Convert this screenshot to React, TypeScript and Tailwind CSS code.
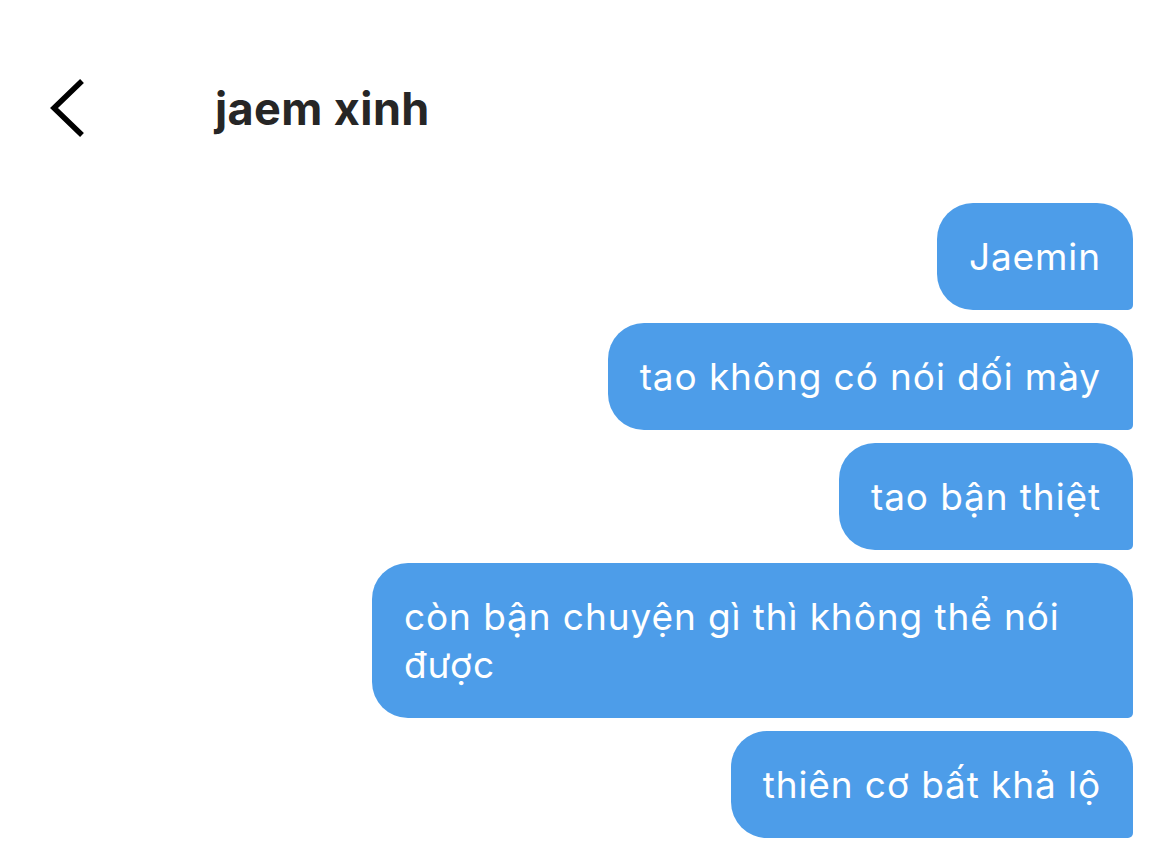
import React from 'react';

const messages = [
  'Jaemin',
  'tao không có nói dối mày',
  'tao bận thiệt',
  'còn bận chuyện gì thì không thể nói được',
  'thiên cơ bất khả lộ',
];

export default function App() {
  return (
    <div className="w-[1169px] h-[846px] overflow-hidden bg-white" style={{ fontFamily: 'Inter, "Noto Sans", sans-serif' }}>
      {/* Header */}
      <div className="flex items-center h-[96px] mt-[60px] pl-[46px]">
        <svg width="42" height="60" viewBox="0 0 42 60" className="shrink-0">
          <path d="M36 3 L8 30 L36 57" fill="none" stroke="#000" strokeWidth="5.5" />
        </svg>
        <h1 className="ml-[127px] text-[45px] font-bold text-[#262626] leading-none tracking-[0.4px]">jaem xinh</h1>
      </div>

      {/* Messages */}
      <div className="flex flex-col items-end gap-[13px] pr-[36px] mt-[47px]">
        {messages.map((m) => (
          <div
            key={m}
            className="max-w-[761px] bg-[#4d9de9] text-white text-[37px] leading-[48px] tracking-[0.9px] px-[32px] py-[29.5px] rounded-[36px] rounded-br-[5px]"
          >
            {m}
          </div>
        ))}
      </div>
    </div>
  );
}
